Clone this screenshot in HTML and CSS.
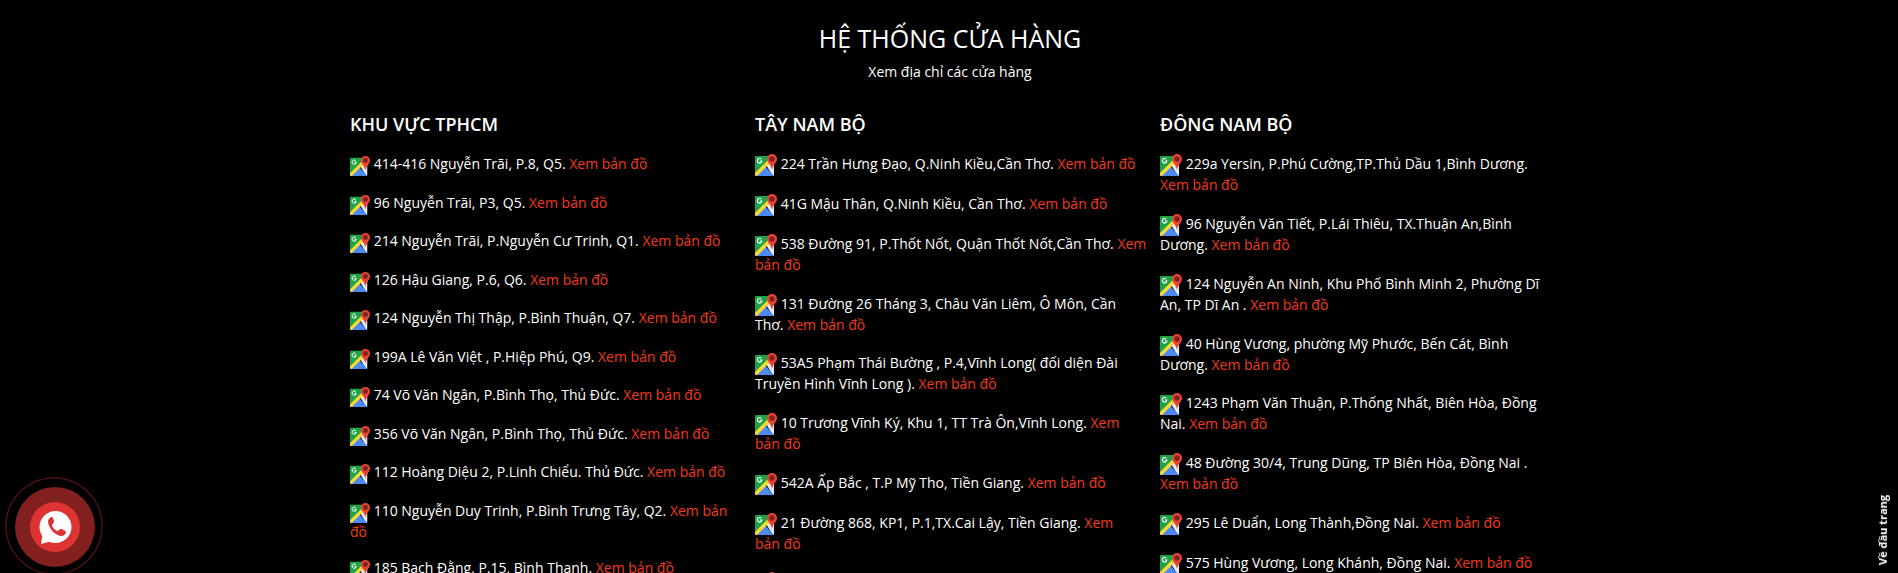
FILE: index.html
```html
<!DOCTYPE html>
<html lang="vi">
<head>
<meta charset="utf-8">
<title>Hệ thống cửa hàng</title>
<link rel="stylesheet" href="styles.css">
</head>
<body>
<svg class="sprite" aria-hidden="true">
  <symbol id="map" viewBox="0 0 22 22">
    <path fill="#1ea446" d="M1 2h13l5 6v3L9 12 0 21V3a1 1 0 0 1 1-1z"/>
    <path fill="#e8eaed" d="M11 11l8-6v16a1 1 0 0 1-1 1z"/>
    <path fill="#4c8bf5" d="M10 12l9 10H1z"/>
    <path fill="#fdd835" d="M0 19L13 6l2 3L2 22H1a1 1 0 0 1-1-1z"/>
    <path fill="none" stroke="#fff" stroke-width="1.1" d="M6.3 5.2A2.3 2.3 0 1 0 6.9 7H4.8"/>
    <path fill="#ea4335" d="M17 0a5 5 0 0 1 5 5c0 4-4 5-5 11-1-6-5-7-5-11a5 5 0 0 1 5-5z"/>
    <circle cx="17" cy="5" r="2.7" fill="#7b231e"/>
  </symbol>
</svg>

<main class="stores">
  <header class="stores-head">
    <h1>HỆ THỐNG CỬA HÀNG</h1>
    <p>Xem địa chỉ các cửa hàng</p>
  </header>
  <div class="regions">
    <section class="region region-compact">
      <h2>KHU VỰC TPHCM</h2>
      <ul>
        <li><svg class="pin"><use href="#map"/></svg> 414-416 Nguyễn Trãi, P.8, Q5. <a href="#">Xem bản đồ</a></li>
        <li><svg class="pin"><use href="#map"/></svg> 96 Nguyễn Trãi, P3, Q5. <a href="#">Xem bản đồ</a></li>
        <li><svg class="pin"><use href="#map"/></svg> 214 Nguyễn Trãi, P.Nguyễn Cư Trinh, Q1. <a href="#">Xem bản đồ</a></li>
        <li><svg class="pin"><use href="#map"/></svg> 126 Hậu Giang, P.6, Q6. <a href="#">Xem bản đồ</a></li>
        <li><svg class="pin"><use href="#map"/></svg> 124 Nguyễn Thị Thập, P.Bình Thuận, Q7. <a href="#">Xem bản đồ</a></li>
        <li><svg class="pin"><use href="#map"/></svg> 199A Lê Văn Việt , P.Hiệp Phú, Q9. <a href="#">Xem bản đồ</a></li>
        <li><svg class="pin"><use href="#map"/></svg> 74 Võ Văn Ngân, P.Bình Thọ, Thủ Đức. <a href="#">Xem bản đồ</a></li>
        <li><svg class="pin"><use href="#map"/></svg> 356 Võ Văn Ngân, P.Bình Thọ, Thủ Đức. <a href="#">Xem bản đồ</a></li>
        <li><svg class="pin"><use href="#map"/></svg> 112 Hoàng Diệu 2, P.Linh Chiểu. Thủ Đức. <a href="#">Xem bản đồ</a></li>
        <li><svg class="pin"><use href="#map"/></svg> 110 Nguyễn Duy Trinh, P.Bình Trưng Tây, Q2. <a href="#">Xem bản đồ</a></li>
        <li><svg class="pin"><use href="#map"/></svg> 185 Bạch Đằng, P.15, Bình Thạnh. <a href="#">Xem bản đồ</a></li>
      </ul>
    </section>
    <section class="region">
      <h2>TÂY NAM BỘ</h2>
      <ul>
        <li><svg class="pin"><use href="#map"/></svg> 224 Trần Hưng Đạo, Q.Ninh Kiều,Cần Thơ. <a href="#">Xem bản đồ</a></li>
        <li><svg class="pin"><use href="#map"/></svg> 41G Mậu Thân, Q.Ninh Kiều, Cần Thơ. <a href="#">Xem bản đồ</a></li>
        <li><svg class="pin"><use href="#map"/></svg> 538 Đường 91, P.Thốt Nốt, Quận Thốt Nốt,Cần Thơ. <a href="#">Xem bản đồ</a></li>
        <li><svg class="pin"><use href="#map"/></svg> 131 Đường 26 Tháng 3, Châu Văn Liêm, Ô Môn, Cần Thơ.&nbsp;<a href="#">Xem bản đồ</a></li>
        <li><svg class="pin"><use href="#map"/></svg> 53A5 Phạm Thái Bường , P.4,Vĩnh Long( đối diện Đài Truyền Hình Vĩnh Long ). <a href="#">Xem bản đồ</a></li>
        <li><svg class="pin"><use href="#map"/></svg> 10 Trương Vĩnh Ký, Khu 1, TT Trà Ôn,Vĩnh Long. <a href="#">Xem bản&nbsp;đồ</a></li>
        <li><svg class="pin"><use href="#map"/></svg> 542A Ấp Bắc , T.P Mỹ Tho, Tiền Giang. <a href="#">Xem bản đồ</a></li>
        <li><svg class="pin"><use href="#map"/></svg> 21 Đường 868, KP1, P.1,TX.Cai Lậy, Tiền Giang. <a href="#">Xem bản&nbsp;đồ</a></li>
        <li><svg class="pin"><use href="#map"/></svg></li>
      </ul>
    </section>
    <section class="region">
      <h2>ĐÔNG NAM BỘ</h2>
      <ul>
        <li><svg class="pin"><use href="#map"/></svg> 229a Yersin, P.Phú Cường,TP.Thủ Dầu 1,Bình Dương. <a href="#">Xem bản đồ</a></li>
        <li><svg class="pin"><use href="#map"/></svg> 96 Nguyễn Văn Tiết, P.Lái Thiêu, TX.Thuận An,Bình Dương.&nbsp;<a href="#">Xem bản đồ</a></li>
        <li><svg class="pin"><use href="#map"/></svg> 124 Nguyễn An Ninh, Khu Phố Bình Minh 2, Phường Dĩ An, TP Dĩ An . <a href="#">Xem bản đồ</a></li>
        <li><svg class="pin"><use href="#map"/></svg> 40 Hùng Vương, phường Mỹ Phước, Bến Cát, Bình Dương.&nbsp;<a href="#">Xem bản đồ</a></li>
        <li><svg class="pin"><use href="#map"/></svg> 1243 Phạm Văn Thuận, P.Thống Nhất, Biên Hòa, Đồng Nai. <a href="#">Xem bản đồ</a></li>
        <li><svg class="pin"><use href="#map"/></svg> 48 Đường 30/4, Trung Dũng, TP Biên Hòa, Đồng Nai . <a href="#">Xem bản đồ</a></li>
        <li><svg class="pin"><use href="#map"/></svg> 295 Lê Duẩn, Long Thành,Đồng Nai. <a href="#">Xem bản đồ</a></li>
        <li><svg class="pin"><use href="#map"/></svg> 575 Hùng Vương, Long Khánh, Đồng Nai. <a href="#">Xem bản đồ</a></li>
      </ul>
    </section>
  </div>
</main>

<a class="call" href="#" aria-label="Gọi điện">
  <svg viewBox="0 0 98 98">
    <circle cx="49" cy="49" r="48" fill="none" stroke="#4a1214" stroke-width="1.5"/>
    <circle cx="50" cy="50" r="40" fill="#821f1f"/>
    <circle cx="50" cy="50" r="25" fill="#dd3333"/>
    <circle cx="50.5" cy="50" r="16" fill="#fff"/>
    <path fill="#fff" d="M36 67l2-12 9 9z"/>
    <path fill="#dd3333" d="M47 40c-2 0-4 2-4 5 1 7 7 13 13 14 3 0 5-2 5-4 0-1-4-3-5-3-2 0-2 2-4 2-2-1-5-4-5-6 0-1 2-2 2-3 0-2-1-5-2-5z"/>
  </svg>
</a>
<a class="to-top" href="#">Về đầu trang</a>
</body>
</html>
```
FILE: styles.css
```css
* { box-sizing: border-box; }
html, body { height: 100%; }
body {
  margin: 0;
  background: #000;
  color: #fff;
  font: 14px/20px "Open Sans", "Noto Sans", sans-serif;
  overflow: hidden;
}
.sprite { display: none; }
.stores {
  height: 100%;
  overflow: hidden;
  padding: 20px 14px 0 16px;
}
.stores-head { text-align: center; }
h1 {
  margin: 0;
  font-size: 25px;
  line-height: 36px;
  font-weight: 400;
}
.stores-head p { margin: 6px 0 30px; }
.regions {
  display: grid;
  grid-template-columns: repeat(3, 1fr);
  column-gap: 10px;
  max-width: 1216px;
  margin: 0 auto;
  padding: 0 3px 0 8px;
}
h2 {
  margin: 0 0 18px;
  font-size: 18px;
  line-height: 24px;
  font-weight: 600;
}
ul {
  margin: 0;
  padding: 0;
  list-style: none;
}
li { margin-bottom: 19px; }
li:nth-child(4n) { margin-bottom: 18px; }
.pin {
  width: 22px;
  height: 22px;
  margin-bottom: -1px;
  vertical-align: -6px;
}
.region-compact ul {
  padding-right: 15px;
  line-height: 19px;
}
.region-compact li { margin-bottom: 18px; }
.region-compact li:nth-child(even) { margin-bottom: 17px; }
.region-compact .pin {
  width: 20px;
  height: 20px;
}
li a { color: #f43b19; text-decoration: none; }
.call {
  position: fixed;
  left: 5px;
  bottom: -2px;
  width: 98px;
  height: 98px;
}
.call svg { display: block; }
.to-top {
  position: fixed;
  right: 8px;
  bottom: 8px;
  color: #fff;
  font-size: 11px;
  line-height: 14px;
  font-weight: 700;
  text-decoration: none;
  writing-mode: vertical-rl;
  transform: rotate(180deg);
}
```
